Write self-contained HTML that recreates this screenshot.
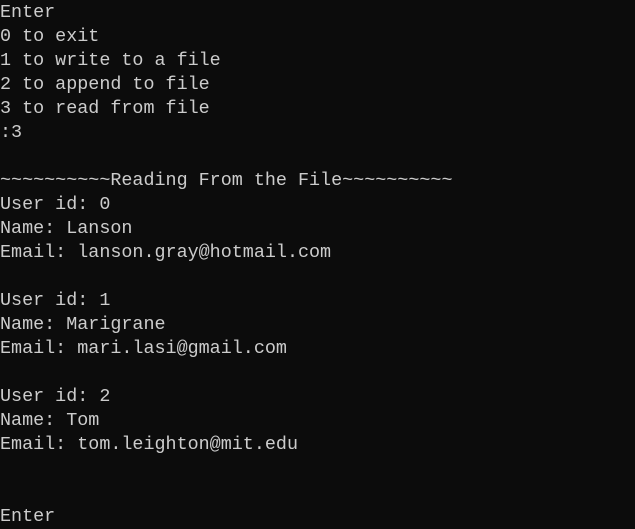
<!DOCTYPE html>
<html><head><style>
html,body{margin:0;padding:0;background:#0c0c0c;width:635px;height:524px;overflow:hidden}
pre{margin:0;position:absolute;left:0;top:1px;font-family:"Liberation Mono",monospace;font-size:18.4px;line-height:24px;color:#cccccc}
</style></head><body>
<pre>Enter
0 to exit
1 to write to a file
2 to append to file
3 to read from file
:3

~~~~~~~~~~Reading From the File~~~~~~~~~~
User id: 0
Name: Lanson
Email: lanson.gray@hotmail.com

User id: 1
Name: Marigrane
Email: mari.lasi@gmail.com

User id: 2
Name: Tom
Email: tom.leighton@mit.edu


Enter</pre>
</body></html>
